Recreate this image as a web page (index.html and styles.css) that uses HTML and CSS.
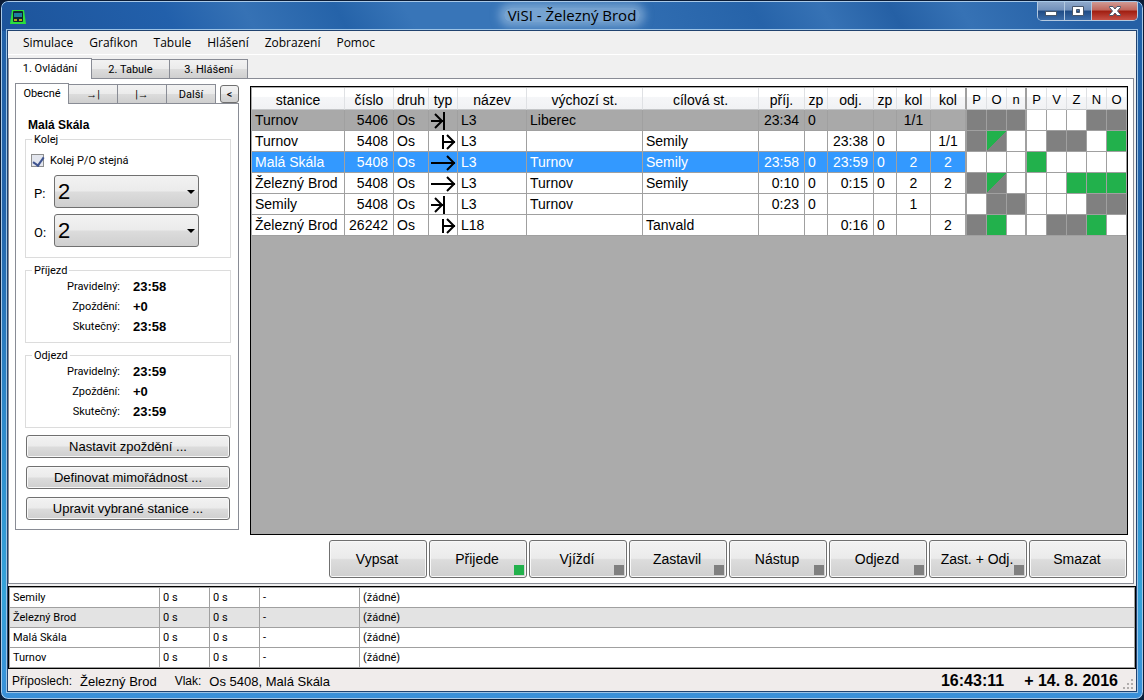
FILE: index.html
```html
<!DOCTYPE html>
<html lang="cs">
<head>
    <meta charset="UTF-8">
    <meta name="viewport" content="width=device-width, initial-scale=1.0">
    <title>ViSI - Železný Brod</title>
    <link rel="stylesheet" href="styles.css">
</head>
<body>

    <!-- Symboly typu vlaku -->
    <svg class="defs" width="0" height="0">
        <symbol id="konci" viewBox="0 0 28 20">
            <path d="M2 11H14M6 4L13 11L6 18M15 2V20" />
        </symbol>
        <symbol id="vychazi" viewBox="0 0 28 20">
            <path d="M14 4V18M14 11H26M18 4L25 11L18 18" />
        </symbol>
        <symbol id="projizdi" viewBox="0 0 28 20">
            <path d="M2 11H26M18 4L25 11L18 18" />
        </symbol>
    </svg>

    <header class="titlebar">
        <svg class="app-icon" viewBox="0 0 16 16">
            <path d="M2 1H14L16 15H0Z" fill="#2be03a" />
            <rect x="3" y="2" width="10" height="11" rx="1" fill="#123" />
            <rect x="4" y="4" width="8" height="4" fill="#1d7f9c" />
            <rect x="4" y="10" width="3" height="2" fill="#b8a51e" />
            <rect x="9" y="10" width="3" height="2" fill="#b8a51e" />
        </svg>
        <h1>ViSI - Železný Brod</h1>
        <div class="window-buttons">
            <button class="min" aria-label="Minimalizovat">
                <svg width="14" height="14" viewBox="0 0 14 14"><rect x="1.5" y="7.5" width="11" height="4" fill="#fff" stroke="#47566b" /></svg>
            </button>
            <button class="max" aria-label="Maximalizovat">
                <svg width="14" height="14" viewBox="0 0 14 14"><path d="M1.500 2.500H12.500V11.500H1.500ZM5.500 5.500V8.500H8.500V5.500Z" fill="#fff" fill-rule="evenodd" stroke="#47566b" /></svg>
            </button>
            <button class="close" aria-label="Zavřít">
                <svg width="14" height="14" viewBox="0 0 14 14"><path d="M1.500 2.500H5L7 5L9 2.500H12.500V3.500L9.500 7L12.500 10.500V11.500H9L7 9L5 11.500H1.500V10.500L4.500 7L1.500 3.500Z" fill="#fff" stroke="#47566b" /></svg>
            </button>
        </div>
    </header>

    <div class="client">
        <nav class="menu">
            <a href="#">Simulace</a>
            <a href="#">Grafikon</a>
            <a href="#">Tabule</a>
            <a href="#">Hlášení</a>
            <a href="#">Zobrazení</a>
            <a href="#">Pomoc</a>
        </nav>

        <div class="tabs main-tabs">
            <button class="tab active">1. Ovládání</button>
            <button class="tab">2. Tabule</button>
            <button class="tab">3. Hlášení</button>
        </div>

        <main>
            <aside>
                <div class="tabs side-tabs">
                    <button class="tab active">Obecné</button>
                    <button class="tab">→|</button>
                    <button class="tab">|→</button>
                    <button class="tab">Další</button>
                    <button class="collapse">&lt;</button>
                </div>

                <div class="side-panel">
                    <h2>Malá Skála</h2>

                    <fieldset>
                        <legend>Kolej</legend>
                        <div class="check">
                            <input type="checkbox" id="stejna" checked>
                            <label for="stejna">Kolej P/O stejná</label>
                        </div>
                        <div class="track">
                            <label for="kolej-p">P:</label>
                            <div class="combo">
                                <select id="kolej-p"><option>2</option></select>
                            </div>
                        </div>
                        <div class="track">
                            <label for="kolej-o">O:</label>
                            <div class="combo">
                                <select id="kolej-o"><option>2</option></select>
                            </div>
                        </div>
                    </fieldset>

                    <fieldset>
                        <legend>Příjezd</legend>
                        <dl>
                            <dt>Pravidelný:</dt><dd>23:58</dd>
                            <dt>Zpoždění:</dt><dd>+0</dd>
                            <dt>Skutečný:</dt><dd>23:58</dd>
                        </dl>
                    </fieldset>

                    <fieldset>
                        <legend>Odjezd</legend>
                        <dl>
                            <dt>Pravidelný:</dt><dd>23:59</dd>
                            <dt>Zpoždění:</dt><dd>+0</dd>
                            <dt>Skutečný:</dt><dd>23:59</dd>
                        </dl>
                    </fieldset>

                    <div class="side-buttons">
                        <button class="btn">Nastavit zpoždění ...</button>
                        <button class="btn">Definovat mimořádnost ...</button>
                        <button class="btn">Upravit vybrané stanice ...</button>
                    </div>
                </div>
            </aside>

            <section class="control">
                <div class="grid">
                    <table class="trains">
                        <colgroup>
                            <col class="c-stanice">
                            <col class="c-cislo">
                            <col class="c-druh">
                            <col class="c-typ">
                            <col class="c-nazev">
                            <col>
                            <col>
                            <col class="c-cas">
                            <col class="c-zp">
                            <col class="c-cas">
                            <col class="c-zp">
                            <col class="c-kol">
                            <col class="c-kol-odj">
                            <col class="c-stav" span="8">
                        </colgroup>
                        <thead>
                            <tr>
                                <th>stanice</th><th>číslo</th><th>druh</th><th>typ</th><th>název</th>
                                <th>výchozí st.</th><th>cílová st.</th><th>příj.</th><th>zp</th><th>odj.</th><th>zp</th>
                                <th>kol</th><th class="sep">kol</th>
                                <th class="s">P</th><th class="s">O</th><th class="s sep">n</th>
                                <th class="s">P</th><th class="s">V</th><th class="s">Z</th><th class="s">N</th><th class="s">O</th>
                            </tr>
                        </thead>
                        <tbody>
                            <tr class="done">
                                <td>Turnov</td><td class="r">5406</td><td>Os</td>
                                <td class="typ"><svg><use href="#konci" /></svg></td>
                                <td>L3</td><td>Liberec</td><td></td>
                                <td class="r">23:34</td><td>0</td><td class="r"></td><td></td>
                                <td class="c">1/1</td><td class="c sep"></td>
                                <td class="s gray"></td><td class="s gray"></td><td class="s gray sep"></td>
                                <td class="s"></td><td class="s"></td><td class="s"></td><td class="s gray"></td><td class="s gray"></td>
                            </tr>
                            <tr>
                                <td>Turnov</td><td class="r">5408</td><td>Os</td>
                                <td class="typ"><svg><use href="#vychazi" /></svg></td>
                                <td>L3</td><td></td><td>Semily</td>
                                <td class="r"></td><td></td><td class="r">23:38</td><td>0</td>
                                <td class="c"></td><td class="c sep">1/1</td>
                                <td class="s gray"></td><td class="s half"></td><td class="s sep"></td>
                                <td class="s"></td><td class="s gray"></td><td class="s gray"></td><td class="s"></td><td class="s green"></td>
                            </tr>
                            <tr class="selected">
                                <td>Malá Skála</td><td class="r">5408</td><td>Os</td>
                                <td class="typ"><svg><use href="#projizdi" /></svg></td>
                                <td>L3</td><td>Turnov</td><td>Semily</td>
                                <td class="r">23:58</td><td>0</td><td class="r">23:59</td><td>0</td>
                                <td class="c">2</td><td class="c sep">2</td>
                                <td class="s"></td><td class="s"></td><td class="s sep"></td>
                                <td class="s green"></td><td class="s"></td><td class="s"></td><td class="s"></td><td class="s"></td>
                            </tr>
                            <tr>
                                <td>Železný Brod</td><td class="r">5408</td><td>Os</td>
                                <td class="typ"><svg><use href="#projizdi" /></svg></td>
                                <td>L3</td><td>Turnov</td><td>Semily</td>
                                <td class="r">0:10</td><td>0</td><td class="r">0:15</td><td>0</td>
                                <td class="c">2</td><td class="c sep">2</td>
                                <td class="s gray"></td><td class="s half"></td><td class="s sep"></td>
                                <td class="s"></td><td class="s"></td><td class="s green"></td><td class="s green"></td><td class="s green"></td>
                            </tr>
                            <tr>
                                <td>Semily</td><td class="r">5408</td><td>Os</td>
                                <td class="typ"><svg><use href="#konci" /></svg></td>
                                <td>L3</td><td>Turnov</td><td></td>
                                <td class="r">0:23</td><td>0</td><td class="r"></td><td></td>
                                <td class="c">1</td><td class="c sep"></td>
                                <td class="s"></td><td class="s gray"></td><td class="s gray sep"></td>
                                <td class="s"></td><td class="s"></td><td class="s"></td><td class="s gray"></td><td class="s gray"></td>
                            </tr>
                            <tr>
                                <td>Železný Brod</td><td class="r">26242</td><td>Os</td>
                                <td class="typ"><svg><use href="#vychazi" /></svg></td>
                                <td>L18</td><td></td><td>Tanvald</td>
                                <td class="r"></td><td></td><td class="r">0:16</td><td>0</td>
                                <td class="c"></td><td class="c sep">2</td>
                                <td class="s gray"></td><td class="s green"></td><td class="s sep"></td>
                                <td class="s"></td><td class="s gray"></td><td class="s gray"></td><td class="s green"></td><td class="s"></td>
                            </tr>
                        </tbody>
                    </table>
                </div>

                <div class="actions">
                    <button class="btn">Vypsat</button>
                    <button class="btn lamp on">Přijede</button>
                    <button class="btn lamp">Vjíždí</button>
                    <button class="btn lamp">Zastavil</button>
                    <button class="btn lamp">Nástup</button>
                    <button class="btn lamp">Odjezd</button>
                    <button class="btn lamp">Zast. + Odj.</button>
                    <button class="btn">Smazat</button>
                </div>
            </section>
        </main>

        <table class="queue">
            <colgroup>
                <col class="q-stanice">
                <col class="q-cas" span="2">
                <col class="q-typ">
                <col>
            </colgroup>
            <tbody>
                <tr><td>Semily</td><td>0 s</td><td>0 s</td><td>-</td><td>(žádné)</td></tr>
                <tr class="current"><td>Železný Brod</td><td>0 s</td><td>0 s</td><td>-</td><td>(žádné)</td></tr>
                <tr><td>Malá Skála</td><td>0 s</td><td>0 s</td><td>-</td><td>(žádné)</td></tr>
                <tr><td>Turnov</td><td>0 s</td><td>0 s</td><td>-</td><td>(žádné)</td></tr>
            </tbody>
        </table>

        <footer>
            <span class="caption">Příposlech:</span>
            <span class="info">Železný Brod</span>
            <span class="caption">Vlak:</span>
            <span class="info">Os 5408, Malá Skála</span>
            <span class="clock">16:43:11</span>
            <span class="date">+ 14. 8. 2016</span>
            <svg class="grip" width="11" height="11" viewBox="0 0 11 11">
                <path d="M8 0h2v2h-2zM4 4h2v2h-2zM8 4h2v2h-2zM0 8h2v2h-2zM4 8h2v2h-2zM8 8h2v2h-2z" fill="#b0adac" />
            </svg>
        </footer>
    </div>

</body>
</html>
```
FILE: styles.css
```css
* {
    box-sizing: border-box;
}

html {
    background-color: #0b1c36;
}

body {
    display: flex;
    flex-direction: column;
    height: 100vh;
    margin: 0;
    padding: 0 7px 8px;
    border: 1px solid #0b1c36;
    border-radius: 8px;
    background: linear-gradient(to bottom, #2161a8 0%, #2465ab 30%, #2f8acb 60%, #36a3da 85%, #3a8fd8 100%);
    box-shadow: inset 0 0 0 1px #a9c9e8;
    font-family: Roboto, "Liberation Sans", sans-serif;
    font-size: 11px;
    color: #000;
}

button, select, input {
    font-family: inherit;
    font-size: inherit;
    color: inherit;
    margin: 0;
    padding: 0;
}

.defs {
    position: absolute;
}

/* Titulek okna */
.titlebar {
    display: flex;
    align-items: center;
    justify-content: space-between;
    height: 29px;
    margin: 1px -6px 0;
    padding: 0 4px 0 8px;
    border-radius: 6px 6px 0 0;
    background: linear-gradient(60deg, #1d549b 0%, #2260ab 15%, #3672b5 22%, #2563a9 30%, #3875b8 36%, #3875b8 48%, #2663a9 66%, #3672b5 72%, #2560a5 78%, #3672b5 84%, #2560a5 94%);
}

.app-icon {
    width: 16px;
    height: 16px;
}

.titlebar h1 {
    margin: 0 0 4px 81px;
    padding: 0 4px;
    border-radius: 10px;
    background-color: rgba(170, 200, 230, 0.55);
    box-shadow: 0 0 8px 5px rgba(170, 200, 230, 0.55);
    font: 15px/14px "Open Sans", sans-serif;
}

.window-buttons {
    display: flex;
    align-self: flex-start;
    height: 19px;
    border: 1px solid #b3c9e0;
    border-top: none;
    border-radius: 0 0 5px 5px;
    overflow: hidden;
}

.window-buttons button {
    display: flex;
    align-items: center;
    justify-content: center;
    width: 27px;
    border: none;
    border-right: 1px solid #b3c9e0;
    background: linear-gradient(to bottom, #8fa9cb 0%, #7290ba 45%, #1f4b85 50%, #3c6ca8 100%);
}

.window-buttons .close {
    width: 45px;
    border-right: none;
    background: linear-gradient(to bottom, #d09a93 0%, #c0665c 45%, #a01d10 50%, #c65046 100%);
}

.client {
    flex: 1;
    display: flex;
    flex-direction: column;
    min-height: 0;
    background-color: #f0f0f0;
    box-shadow: 0 0 0 1px #20426f, 0 0 0 2px #9cc3e6;
}

.menu {
    display: flex;
    gap: 16px;
    height: 24px;
    padding-left: 15px;
    border-bottom: 1px solid #fff;
    line-height: 24px;
}

.menu a {
    color: #000;
    text-decoration: none;
    font-family: "Open Sans", sans-serif;
    font-size: 12px;
}

/* Záložky */
.tabs {
    display: flex;
    align-items: flex-end;
}

.tab {
    height: 19px;
    border: 1px solid #898c95;
    border-left: none;
    border-bottom: none;
    background: linear-gradient(to bottom, #f2f2f2 0%, #ebebeb 48%, #dcdcdc 52%, #cfcfcf 100%);
}

.tab.active {
    height: 21px;
    margin-bottom: -1px;
    padding-bottom: 2px;
    border-left: 1px solid #898c95;
    background: #fff;
    position: relative;
}

.main-tabs {
    padding-top: 3px;
}

.main-tabs .tab {
    width: 78px;
}

.main-tabs .tab.active {
    width: 84px;
}

main {
    flex: 1;
    display: flex;
    gap: 11px;
    min-height: 0;
    margin-right: 2px;
    padding: 4px 5px 5px 6px;
    border: 1px solid #898c95;
    background-color: #fff;
}

aside {
    flex: none;
    width: 224px;
}

.side-tabs .tab {
    width: 49px;
}

.side-tabs .tab.active {
    width: 54px;
}

.collapse {
    width: 19px;
    height: 18px;
    margin-left: auto;
    border: 1px solid #707070;
    border-radius: 3px;
    background: linear-gradient(to bottom, #f2f2f2 0%, #ebebeb 48%, #dcdcdc 52%, #cfcfcf 100%);
}

.side-panel {
    padding: 13px 7px 9px 9px;
    border: 1px solid #898c95;
}

.side-panel h2 {
    margin: 0;
    padding-left: 3px;
    font: bold 12px/16px "Liberation Sans", sans-serif;
}

fieldset {
    margin: 0 0 6px;
    padding: 0;
    border: 1px solid #dcdcdc;
}

legend {
    margin-left: 6px;
    padding: 0 2px;
    line-height: 13px;
}

.check {
    display: flex;
    align-items: center;
    gap: 6px;
    height: 16px;
    margin: 6px 0 7px 5px;
}

.check input {
    appearance: none;
    width: 13px;
    height: 13px;
    border: 1px solid #8e8f8f;
    background-color: #e3e6ee;
    position: relative;
}

.check input:checked::after {
    content: "";
    position: absolute;
    left: 3px;
    top: 0;
    width: 5px;
    height: 9px;
    border: solid #3f5490;
    border-width: 0 2px 2px 0;
    transform: rotate(35deg);
}

.track {
    display: flex;
    align-items: center;
    height: 33px;
    margin-bottom: 6px;
    padding-left: 8px;
}

.track:last-child {
    margin-bottom: 10px;
}

.track label {
    width: 20px;
    padding-top: 4px;
    font-size: 13px;
}

.combo {
    position: relative;
    width: 145px;
}

.combo::after {
    content: "";
    position: absolute;
    right: 4px;
    top: 15px;
    border: 4px solid transparent;
    border-top-color: #000;
    border-bottom: none;
}

.combo select {
    appearance: none;
    display: block;
    width: 100%;
    height: 33px;
    padding-left: 3px;
    border: 1px solid #707070;
    border-radius: 3px;
    background: linear-gradient(to bottom, #f2f2f2 0%, #ebebeb 48%, #dcdcdc 52%, #cfcfcf 100%);
    font: 22px "Liberation Sans", sans-serif;
}

dl {
    display: grid;
    grid-template-columns: 94px 1fr;
    column-gap: 13px;
    margin: 0 0 5px;
    line-height: 20px;
}

dt {
    text-align: right;
}

dd {
    margin: 0;
    font-family: "Liberation Sans", sans-serif;
    font-size: 13px;
    font-weight: bold;
}

.btn {
    border: 1px solid #707070;
    border-radius: 3px;
    background: linear-gradient(to bottom, #f2f2f2 0%, #ebebeb 48%, #dcdcdc 52%, #cfcfcf 100%);
    box-shadow: inset 0 0 0 1px #f8f8f8;
    font-family: "Liberation Sans", sans-serif;
    font-size: 13px;
    white-space: nowrap;
}

.side-buttons {
    display: flex;
    flex-direction: column;
    gap: 8px;
    padding: 1px 1px 0;
}

.side-buttons .btn {
    height: 23px;
}

/* Přehled vlaků */
.control {
    flex: 1;
    display: flex;
    flex-direction: column;
    gap: 5px;
    min-width: 0;
    padding-top: 3px;
}

.grid {
    flex: 1;
    padding: 1px 0 0 1px;
    border: 1px solid #000;
    background-color: #ababab;
}

table {
    border-collapse: separate;
    border-spacing: 0;
    table-layout: fixed;
}

.trains {
    width: 100%;
    font-family: "Liberation Sans", sans-serif;
    font-size: 14px;
    line-height: 20px;
}

.c-stanice { width: 93px; }
.c-cislo { width: 49px; }
.c-druh { width: 35px; }
.c-typ { width: 29px; }
.c-nazev { width: 69px; }
.c-cas { width: 46px; }
.c-zp { width: 23px; }
.c-kol { width: 34px; }
.c-kol-odj { width: 36px; }
.c-stav { width: 20px; }

.trains th {
    height: 22px;
    padding: 3px 0 0;
    border-right: 1px solid #dfe1e4;
    border-bottom: 1px solid #c4c6c8;
    background: linear-gradient(to bottom, #fff 0%, #fff 40%, #f5f6f8 45%, #f1f2f4 100%);
    font-weight: normal;
    line-height: 18px;
}

.trains td {
    height: 21px;
    padding: 1px 0 0 3px;
    border-right: 1px solid #a0a0a0;
    border-bottom: 1px solid #a0a0a0;
    background-color: #fff;
    line-height: 19px;
    white-space: nowrap;
}

.trains .r {
    padding: 1px 5px 0 0;
    text-align: right;
}

.trains .c {
    padding: 1px 0 0;
    text-align: center;
}

.trains .typ {
    padding: 0;
}

.trains .sep {
    border-right: 2px solid #a0a0a0;
}

.trains th.s {
    font-size: 13px;
}

.typ svg {
    display: block;
    width: 28px;
    height: 20px;
    fill: none;
    stroke: #000;
    stroke-width: 2;
}

.done td {
    background-color: #a9a9a9;
}

.selected td {
    background-color: #3399ff;
    color: #fff;
}

.trains .s {
    padding-left: 0;
}

.trains td.s {
    background-color: #fff;
}

.trains td.gray {
    background-color: #808080;
}

.trains td.green {
    background-color: #22b14c;
}

.trains td.half {
    background: linear-gradient(to bottom right, #22b14c 50%, #808080 50%);
}

.actions {
    display: flex;
    justify-content: flex-end;
    gap: 2px;
    padding-right: 1px;
}

.actions .btn {
    position: relative;
    width: 98px;
    height: 38px;
    padding-right: 2px;
    font-size: 14px;
}

.lamp::after {
    content: "";
    position: absolute;
    right: 2px;
    bottom: 2px;
    width: 10px;
    height: 10px;
    background-color: #808080;
}

.lamp.on::after {
    background-color: #22b14c;
}

/* Fronta hlášení */
.queue {
    width: 100%;
    margin-top: 2px;
    border: 1px solid #000;
    background-color: #fff;
}

.q-stanice { width: 151px; }
.q-cas { width: 50px; }
.q-typ { width: 100px; }

.queue td {
    height: 20px;
    padding: 0 3px;
    border-right: 1px solid #a0a0a0;
    border-bottom: 1px solid #a0a0a0;
    line-height: 19px;
}

.queue td:first-child {
    border-left: 1px solid #a0a0a0;
}

.queue tr:first-child td {
    border-top: 1px solid #a0a0a0;
}

.current td {
    background-color: #e3e3e3;
}

footer {
    display: flex;
    align-items: center;
    height: 22px;
    padding: 2px 2px 0 4px;
    background-color: #f0eceb;
}

.caption {
    margin-right: 8px;
    font: 12px "Liberation Sans", sans-serif;
}

.info {
    margin-right: 18px;
    font: 13px "Liberation Sans", sans-serif;
}

.clock, .date {
    font: bold 16px "Liberation Sans", sans-serif;
}

.clock {
    margin-left: auto;
    margin-right: 20px;
}

.date {
    margin-right: 5px;
}

.grip {
    align-self: flex-end;
    margin-bottom: 1px;
}
```
